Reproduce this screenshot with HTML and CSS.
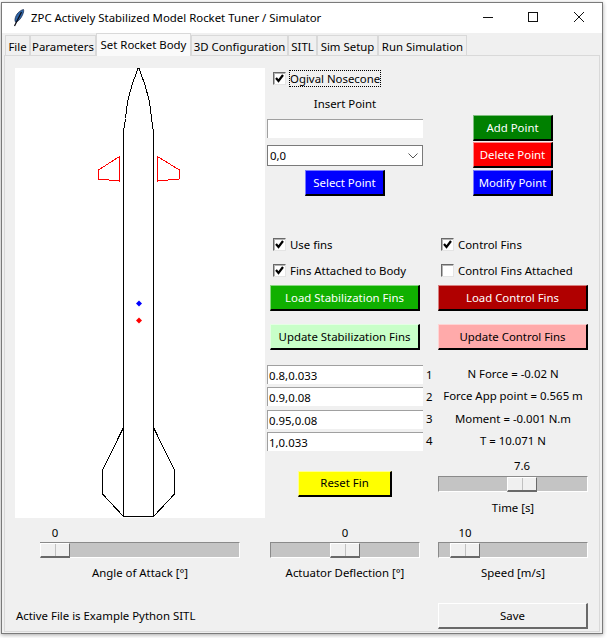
FILE: index.html
```html
<!DOCTYPE html>
<html lang="en">
<head>
<meta charset="utf-8">
<title>ZPC Actively Stabilized Model Rocket Tuner / Simulator</title>
<link rel="stylesheet" href="styles.css">
</head>
<body>
<div class="window">
  <header class="titlebar">
    <svg class="feather" width="12" height="18" viewBox="0 0 12 18"><path d="M10.500 .5C6.500 1.500 3 5 2 10C1.800 11.200 2 12.500 2.600 13.200C5.500 12.500 8 9.500 9.500 6C10.500 3.800 11 2 10.500 .5Z" fill="#2f66a8" stroke="#14264a" stroke-width=".7"/><path d="M8.500 3L1.500 17" stroke="#0c0c14" stroke-width="1.200" fill="none"/></svg>
    <span class="title">ZPC Actively Stabilized Model Rocket Tuner / Simulator</span>
    <div class="controls">
      <svg width="46" height="30" viewBox="0 0 46 30"><path d="M19 14.500H29" stroke="#111" fill="none"/></svg>
      <svg width="46" height="30" viewBox="0 0 46 30"><rect x="18.500" y="9.500" width="9" height="9" stroke="#111" fill="none"/></svg>
      <svg width="46" height="30" viewBox="0 0 46 30"><path d="M18 9L28 19M28 9L18 19" stroke="#111" fill="none"/></svg>
    </div>
  </header>

  <nav class="tabs">
    <span class="tab tab-file">File</span>
    <span class="tab tab-params">Parameters</span>
    <span class="tab tab-active">Set Rocket Body</span>
    <span class="tab tab-3d">3D Configuration</span>
    <span class="tab tab-sitl">SITL</span>
    <span class="tab tab-setup">Sim Setup</span>
    <span class="tab tab-run">Run Simulation</span>
  </nav>

  <main class="panel">
    <section class="upper">
      <svg class="canvas" width="250" height="450" viewBox="0 0 250 450">
        <g fill="none" stroke="#000" shape-rendering="crispEdges">
          <path d="M108.500 73L109 60.500L110.500 50.500L112.500 33.500L117.500 15.500L123 .5L124 .5L129.500 15.500L134.500 33.500L136.500 50.500L138 60.500L138.500 73V448.500H108.500Z"/>
          <path d="M108.500 359.500L87.500 402V426L108.500 448.500"/>
          <path d="M138.500 359.500L159.500 402V426L138.500 448.500"/>
        </g>
        <g fill="none" stroke="#f00" shape-rendering="crispEdges">
          <path d="M104.500 88.500L83.500 102V111L104.500 113Z"/>
          <path d="M142.500 88.500L164.500 102V111L142.500 113Z"/>
        </g>
        <path d="M124 232.500L127 235.500L124 238.500L121 235.500Z" fill="#00f"/>
        <path d="M124 249.500L127 252.500L124 255.500L121 252.500Z" fill="#f00"/>
      </svg>

      <div class="col-mid">
        <label class="check check-focus"><span class="box on"><svg width="11" height="11" viewBox="0 0 11 11"><path d="M2 5L4.500 8L9 2" fill="none" stroke="#000" stroke-width="2.200"/></svg></span><span class="focus">Ogival Nosecone</span></label>
        <div class="insert-label">Insert Point</div>
        <input class="entry entry-insert" type="text" value="">
        <div class="combo"><span>0,0</span><svg width="10" height="6" viewBox="0 0 10 6"><path d="M.5 .5L5 5L9.500 .5" fill="none" stroke="#555"/></svg></div>
        <button class="btn btn-blue btn-select">Select Point</button>

        <label class="check check-use"><span class="box on"><svg width="11" height="11" viewBox="0 0 11 11"><path d="M2 5L4.500 8L9 2" fill="none" stroke="#000" stroke-width="2.200"/></svg></span><span>Use fins</span></label>
        <label class="check check-second"><span class="box on"><svg width="11" height="11" viewBox="0 0 11 11"><path d="M2 5L4.500 8L9 2" fill="none" stroke="#000" stroke-width="2.200"/></svg></span><span>Fins Attached to Body</span></label>
        <button class="btn btn-wide btn-load-green">Load Stabilization Fins</button>
        <button class="btn btn-wide btn-update-green">Update Stabilization Fins</button>

        <div class="points">
          <div class="point"><input class="entry" type="text" value="0.8,0.033"><span>1</span></div>
          <div class="point"><input class="entry" type="text" value="0.9,0.08"><span>2</span></div>
          <div class="point"><input class="entry" type="text" value="0.95,0.08"><span>3</span></div>
          <div class="point"><input class="entry" type="text" value="1,0.033"><span>4</span></div>
        </div>
        <button class="btn btn-reset">Reset Fin</button>
      </div>

      <div class="col-right">
        <div class="point-actions">
          <button class="btn btn-green">Add Point</button>
          <button class="btn btn-red">Delete Point</button>
          <button class="btn btn-blue">Modify Point</button>
        </div>
        <label class="check check-use"><span class="box on"><svg width="11" height="11" viewBox="0 0 11 11"><path d="M2 5L4.500 8L9 2" fill="none" stroke="#000" stroke-width="2.200"/></svg></span><span>Control Fins</span></label>
        <label class="check check-second"><span class="box"></span><span>Control Fins Attached</span></label>
        <button class="btn btn-wide btn-load-red">Load Control Fins</button>
        <button class="btn btn-wide btn-update-red">Update Control Fins</button>
        <div class="readouts">
          <div>N Force = -0.02 N</div>
          <div>Force App point = 0.565 m</div>
          <div>Moment = -0.001 N.m</div>
          <div>T = 10.071 N</div>
        </div>
        <div class="scale scale-time" style="--pos:69px">
          <div class="scale-value">7.6</div>
          <div class="trough"><div class="thumb"></div></div>
          <div class="scale-caption">Time [s]</div>
        </div>
      </div>
    </section>

    <section class="sliders">
      <div class="scale scale-angle" style="--pos:0px">
        <div class="scale-value">0</div>
        <div class="trough"><div class="thumb"></div></div>
        <div class="scale-caption">Angle of Attack [°]</div>
      </div>
      <div class="scale scale-actuator" style="--pos:60px">
        <div class="scale-value">0</div>
        <div class="trough"><div class="thumb"></div></div>
        <div class="scale-caption">Actuator Deflection [°]</div>
      </div>
      <div class="scale scale-speed" style="--pos:12px">
        <div class="scale-value">10</div>
        <div class="trough"><div class="thumb"></div></div>
        <div class="scale-caption">Speed [m/s]</div>
      </div>
    </section>

    <footer class="statusbar">
      <span class="status">Active File is Example Python SITL</span>
      <button class="btn btn-wide btn-save">Save</button>
    </footer>
  </main>
</div>
</body>
</html>
```

FILE: styles.css
```css
* { box-sizing: border-box; }

html, body {
  margin: 0;
  height: 100%;
  background: #fff;
}

body {
  padding: 2px 0 0 1px;
  font: 11.4px/16px "Noto Sans", "Open Sans", sans-serif;
  color: #000;
  overflow: hidden;
}

.window {
  width: 602px;
  height: 632px;
  display: flex;
  flex-direction: column;
  border: 1px solid #7a7a7a;
  background: #f0f0f0;
  box-shadow: 0 1px 4px rgba(0, 0, 0, .35);
}

/* title bar */
.titlebar {
  height: 30px;
  flex: none;
  display: flex;
  align-items: center;
  background: #fff;
  padding-left: 11px;
}

.feather { flex: none; }

.title { margin-left: 6px; }

.controls {
  margin-left: auto;
  display: flex;
}

/* tabs */
.tabs {
  height: 22px;
  flex: none;
  display: flex;
  align-items: flex-end;
  padding-left: 3px;
}

.tab {
  height: 20px;
  border: 1px solid #d9d9d9;
  border-bottom: 0;
  text-align: center;
  line-height: 21px;
  background: #f0f0f0;
  white-space: nowrap;
}

.tab-file { width: 25px; }
.tab-params { width: 66px; }
.tab-active {
  width: 95px;
  height: 23px;
  line-height: 21px;
  background: #fafafa;
  position: relative;
  margin-bottom: -1px;
  z-index: 1;
}
.tab-3d { width: 97px; }
.tab-sitl { width: 29px; }
.tab-setup { width: 61px; }
.tab-run { width: 89px; }

/* panel */
.panel {
  flex: 1;
  margin: 0 2px 1px 2px;
  border: 1px solid #d9d9d9;
  padding: 12px 0 0 10px;
  background: #f0f0f0;
  display: flex;
  flex-direction: column;
}

.upper {
  height: 450px;
  flex: none;
  display: flex;
}

.canvas {
  flex: none;
  display: block;
  background: #fff;
}

.col-mid,
.col-right {
  flex: none;
  display: flex;
  flex-direction: column;
  align-items: flex-start;
}

.col-mid > *,
.col-right > * { flex: none; }

.col-mid {
  width: 156px;
  margin-left: 2px;
}

.col-right {
  width: 150px;
  margin-left: 15px;
}

/* checkboxes */
.check {
  display: flex;
  align-items: center;
  height: 17px;
  white-space: nowrap;
}

.col-mid .check { margin-left: 6px; }
.col-right .check { margin-left: 3px; }

.box {
  width: 13px;
  height: 13px;
  flex: none;
  margin-right: 4px;
  background: #fff;
  border: 1px solid #696969;
  border-right-color: #e4e4e4;
  border-bottom-color: #e4e4e4;
  box-shadow: inset 1px 1px 0 #b4b4b4;
  display: flex;
}

.check-focus { margin-top: 2px; }

.focus {
  outline: 1px dotted #000;
  outline-offset: -1px;
  padding: 0 1px;
  line-height: 17px;
  margin-left: -1px;
}

.check-second { margin-top: 9px; }

.col-mid .check-use,
.col-right .check-use { margin-top: 40px; }

.insert-label {
  width: 100%;
  text-align: center;
  margin-top: 8px;
  line-height: 17px;
}

/* entries */
.entry {
  display: block;
  width: 156px;
  height: 19px;
  padding: 1px 0 0 1px;
  border: 0;
  border-top: 1px solid #a0a0a0;
  border-left: 1px solid #a0a0a0;
  background: #fff;
  font: inherit;
  color: #000;
  outline: none;
}

.entry-insert { margin-top: 7px; }

.combo {
  width: 156px;
  height: 21px;
  margin-top: 7px;
  border: 1px solid #7a7a7a;
  background: #fff;
  display: flex;
  align-items: center;
  justify-content: space-between;
  padding: 0 4px 0 2px;
}

/* buttons */
.btn {
  display: block;
  width: 80px;
  height: 26px;
  padding: 0;
  font: inherit;
  color: #fff;
  border: 1px solid #a0a0a0;
  border-right: 2px solid #000;
  border-bottom: 2px solid #000;
  white-space: nowrap;
}

.btn-wide { width: 150px; }

.btn-blue { background: #00f; border-top-color: #7a7aff; border-left-color: #7a7aff; }
.btn-green { background: #008000; border-top-color: #7fbf7f; border-left-color: #7fbf7f; }
.btn-red { background: #f00; border-top-color: #ff8a8a; border-left-color: #ff8a8a; }
.btn-load-green { background: #10b000; border-top-color: #88d880; border-left-color: #88d880; }
.btn-load-red { background: #b00000; border-top-color: #d88080; border-left-color: #d88080; }
.btn-update-green { background: #c8ffc8; color: #000; border-top-color: #e4ffe4; border-left-color: #e4ffe4; }
.btn-update-red { background: #ffaaaa; color: #000; border-top-color: #ffd4d4; border-left-color: #ffd4d4; }
.btn-save { background: #f0f0f0; color: #000; border-top-color: #fff; border-left-color: #fff; border-right-color: #696969; border-bottom-color: #696969; }

.btn-select { margin: 4px 0 0 38px; }

.btn-load-green { margin: 6px 0 0 3px; }
.btn-update-green { margin: 13px 0 0 3px; }
.btn-load-red { margin-top: 6px; }
.btn-update-red { margin-top: 13px; }

.btn-reset {
  width: 94px;
  margin: 20px 0 0 31px;
  background: #ff0;
  color: #000;
  border-top-color: #ffff90;
  border-left-color: #ffff90;
}

.point-actions {
  margin: 47px 0 0 35px;
  display: flex;
  flex-direction: column;
  gap: 1px;
}

.point-actions .btn-blue { margin-top: 1px; }

/* fin points */
.points {
  margin-top: 15px;
  display: flex;
  flex-direction: column;
  gap: 3.330px;
}

.point {
  display: flex;
  align-items: center;
  width: 170px;
}

.point span { margin-left: 3px; }

.readouts {
  width: 150px;
  margin-top: 13px;
  text-align: center;
  white-space: nowrap;
}

.readouts div { height: 22.300px; line-height: 22px; }

/* scales */
.scale { width: 200px; }

.scale-value {
  width: 30px;
  margin-left: var(--pos);
  text-align: center;
}

.trough {
  height: 16px;
  margin-top: 1px;
  background: #c4c4c4;
  border-top: 1px solid #8a8a8a;
  border-left: 1px solid #8a8a8a;
  border-bottom: 1px solid #fff;
  border-right: 1px solid #fff;
  display: flex;
}

.thumb {
  width: 30px;
  margin-left: calc(var(--pos) - 1px);
  height: 15px;
  border: 1px solid #fff;
  border-right: 1px solid #696969;
  border-bottom: 2px solid #696969;
  background: linear-gradient(#c0c0c0, #c0c0c0) center / 1px 100% no-repeat, #f0f0f0;
}

.scale-caption {
  text-align: center;
  margin-top: 7px;
  white-space: nowrap;
}

.scale-time { width: 150px; margin-top: 6px; }
.scale-time .trough { margin-top: 2px; }
.scale-time .scale-caption { margin-top: 8px; }

.sliders {
  display: flex;
  padding-top: 7px;
  flex: none;
}

.scale-angle { margin-left: 25px; }
.scale-actuator { width: 150px; margin-left: 30px; }
.scale-speed { width: 150px; margin-left: 18px; }

.statusbar {
  display: flex;
  align-items: center;
  justify-content: space-between;
  margin-top: 22px;
  width: 573px;
}

.status { margin-left: 1px; }
```
